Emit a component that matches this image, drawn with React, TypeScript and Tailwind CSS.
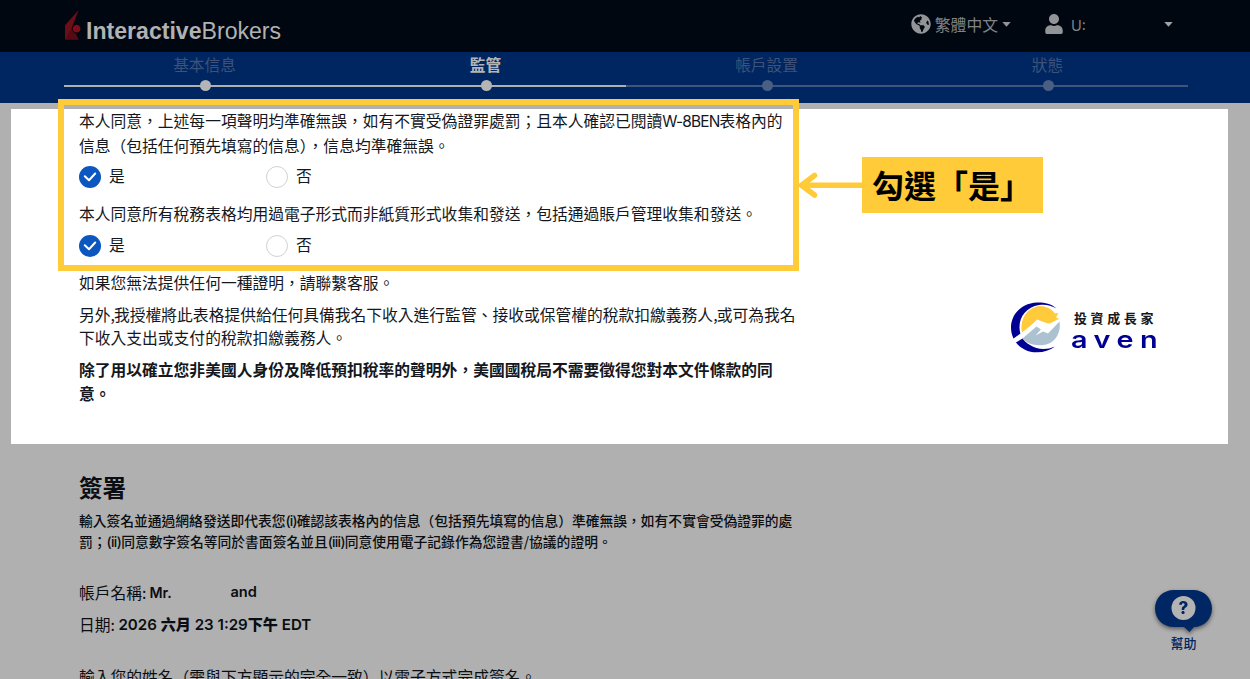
import type { ReactNode } from "react";
import { FaGlobeAmericas, FaUser } from "react-icons/fa";
import clsx from "clsx";

interface Step {
  label: string;
  state: "done" | "current" | "todo";
}

const steps: Step[] = [
  { label: "基本信息", state: "done" },
  { label: "監管", state: "current" },
  { label: "帳戶設置", state: "todo" },
  { label: "狀態", state: "todo" },
];

function Caret() {
  return (
    <svg width="9" height="5" viewBox="0 0 9 5" fill="currentColor">
      <path d="M0.3 0h8.4L4.5 4.7z" />
    </svg>
  );
}

function BrokerLogo() {
  return (
    <div className="flex items-start">
      <svg width="17" height="31" viewBox="0 0 17 31" className="mt-[10px]">
        <path d="M14.6 0 8 17.500 14.6 29.500H1V15.200z" fill="#6d0d17" />
        <path d="M8 17.500 14.6 29.500H1z" fill="#560a13" />
        <circle cx="12.600" cy="18.700" r="4.300" fill="#7d0d18" stroke="#000711" strokeWidth="0.9" />
      </svg>
      <div className="ml-[5px] mt-[18px] text-[23.1px] leading-[26px] text-[#b2b2b2] font-['Liberation_Sans',sans-serif]">
        <span className="font-bold">Interactive</span>
        <span>Brokers</span>
      </div>
    </div>
  );
}

function TopBar() {
  return (
    <header className="flex h-[52px] justify-between bg-[#000711] pl-16 pr-[77px]">
      <BrokerLogo />
      <div className="flex h-[48px] items-center text-[#7f8286]">
        <FaGlobeAmericas size={20} className="text-[#929497]" />
        <span className="ml-[4px] mt-[1px] text-[15.8px]">繁體中文</span>
        <span className="ml-[4px] text-[#929497]">
          <Caret />
        </span>
        <FaUser size={20} className="ml-[33px] text-[#929497]" />
        <span className="ml-[7px] mt-[3px] w-[93px] font-[Inter] text-[14.5px]">U:</span>
        <span className="text-[#a0a2a5]">
          <Caret />
        </span>
      </div>
    </header>
  );
}

function ProgressSteps() {
  return (
    <nav className="relative flex h-[50.5px] bg-[#002661] px-16">
      <div className="absolute left-16 top-[33px] h-[2px] w-[562px] bg-[#b0b0b0]" />
      <div className="absolute left-[626px] top-[33px] h-[2px] w-[562px] bg-[#3f557c]" />
      {steps.map((step) => (
        <div key={step.label} className="relative flex w-[281px] shrink-0 flex-col items-center">
          <span
            className={clsx(
              "mt-[1px] h-[24px] text-[15.7px] leading-[24px]",
              step.state === "current" ? "font-bold text-[#b5b5b5]" : "text-[#3d5279]"
            )}
          >
            {step.label}
          </span>
          <span
            className={clsx(
              "ml-px mt-[3px] size-[11px] rounded-full",
              step.state === "todo" ? "bg-[#4b5f84]" : "bg-[#b5b5b5]"
            )}
          />
        </div>
      ))}
    </nav>
  );
}

function Option({ label, checked }: { label: string; checked?: boolean }) {
  return (
    <div className="flex w-[187px] items-center gap-2">
      {checked ? (
        <span className="flex size-[22px] items-center justify-center rounded-full bg-[#0c56c0]">
          <svg width="14" height="10" viewBox="0 0 14 10" fill="none">
            <path
              d="M1.8 4.2 6 8.2 12.2 1.5"
              stroke="#fff"
              strokeWidth="2"
              strokeLinecap="round"
              strokeLinejoin="round"
            />
          </svg>
        </span>
      ) : (
        <span className="size-[22px] rounded-full border border-[#d2d2d2] bg-white" />
      )}
      <span className="-mt-[2px] leading-[24px]">{label}</span>
    </div>
  );
}

function YesNo() {
  return (
    <div className="mt-[8px] flex h-[24px]">
      <Option label="是" checked />
      <Option label="否" />
    </div>
  );
}

function Paragraph({ lines, className }: { lines: ReactNode[]; className?: string }) {
  return (
    <p className={className}>
      {lines.map((line, i) => (
        <span key={i} className="block whitespace-nowrap">
          {line}
        </span>
      ))}
    </p>
  );
}

function AvenLogo() {
  return (
    <div className="flex">
      <svg width="52" height="52" viewBox="0 0 52 52">
        <path
          d="M46.5 6.500C41 1.500 34 0.300 27 0.500C12 1 1 12 1 25.500C1 40 13 50.500 27 50.300C34 50.200 40 48.500 45 44.500C36 48.500 27 47.500 20 43C13 39 9.500 33 9.500 25C9.500 14 17 5 29 3C35 2 41 3 46.500 6.500z"
          fill="#000093"
        />
        <path
          d="M12 30C9.500 16 18 5.200 30 4C36 4 42 7 45 11.500L48.500 11L46 15.500L49.500 17L42 22L36.500 21L27 17.500L16 29z"
          fill="#ffcb3a"
        />
        <path d="M1.500 38 12 30.500 27 18.500 34 24.500 49.500 16.500 36 30 26 30 12.500 36.500 5 41z" fill="#fff" />
        <path
          d="M12.500 36.500 26.500 24.500 31 27.500 25.500 33.500 33 29.500 38 31.500 49.500 19.500C51.500 32 44 43 31 43.200C23 43.500 16 41 12.500 36.500z"
          fill="#adc2d0"
        />
      </svg>
      <div className="ml-[12px] mt-[6px]">
        <div className="h-[21px] whitespace-nowrap text-[13px] font-bold leading-[20px] tracking-[3.6px] text-[#15181d]">
          投資成長家
        </div>
        <div className="-ml-[3px] w-[76px] origin-left scale-x-120 text-[24px] font-semibold leading-[22px] tracking-[5.4px] text-[#000093] font-['Inter',sans-serif]">
          aven
        </div>
      </div>
    </div>
  );
}

function Declarations() {
  return (
    <main className="ml-[11px] mt-[6.5px] flex h-[335px] w-[1217px] bg-white pl-[68px] text-[#14181e]">
      <section className="w-[931px] text-[15.77px] leading-[23.7px]">
        <Paragraph
          lines={[
            <>
              本人同意，上述每一項聲明均準確無誤，如有不實受偽證罪處罰；且本人確認已閱讀
              <span className="text-[15.4px] tracking-[-0.8px] font-['Inter',sans-serif]">W-8BEN</span>
              表格內的
            </>,
            "信息（包括任何預先填寫的信息），信息均準確無誤。",
          ]}
        />
        <YesNo />
        <Paragraph
          className="mt-[13px]"
          lines={["本人同意所有稅務表格均用過電子形式而非紙質形式收集和發送，包括通過賬戶管理收集和發送。"]}
        />
        <YesNo />
        <Paragraph className="mt-[13px]" lines={["如果您無法提供任何一種證明，請聯繫客服。"]} />
        <Paragraph
          className="mt-[7.8px]"
          lines={[
            <>
              另外<span className="tracking-[-0.9px]">,</span>
              我授權將此表格提供給任何具備我名下收入進行監管、接收或保管權的稅款扣繳義務人
              <span className="tracking-[-0.9px]">,</span>或可為我名
            </>,
            "下收入支出或支付的稅款扣繳義務人。",
          ]}
        />
        <Paragraph
          className="mt-[7.8px] font-bold"
          lines={["除了用以確立您非美國人身份及降低預扣稅率的聲明外，美國國稅局不需要徵得您對本文件條款的同", "意。"]}
        />
      </section>
      <div className="mt-[193px]">
        <AvenLogo />
      </div>
    </main>
  );
}

function Signature() {
  return (
    <section className="pl-[79px] text-[#0a0d11]">
      <h2 className="mt-[26px] text-[23.5px] font-bold leading-[34px]">簽署</h2>
      <Paragraph
        className="mt-[7px] text-[13.77px] leading-[19.7px] font-medium"
        lines={[
          <>
            輸入簽名並通過網絡發送即代表您
            <span className="tracking-[-0.8px] font-['Inter',sans-serif]">(i)</span>
            確認該表格內的信息（包括預先填寫的信息）準確無誤，如有不實會受偽證罪的處
          </>,
          <>
            罰；<span className="tracking-[-0.6px] font-['Inter',sans-serif]">(ii)</span>
            同意數字簽名等同於書面簽名並且
            <span className="tracking-[-0.7px] font-['Inter',sans-serif]">(iii)</span>
            同意使用電子記錄作為您證書/協議的證明。
          </>,
        ]}
      />
      <div className="mt-[28px] flex h-[24px] items-center text-[15.77px]">
        <span>帳戶名稱:</span>
        <span className="ml-[3px] w-[81px] text-[14.2px] font-semibold font-['Inter',sans-serif]">Mr.</span>
        <span className="mt-[2px] text-[14.6px] font-semibold font-['Inter',sans-serif]">and</span>
      </div>
      <div className="mt-[8.5px] flex h-[24px] items-center whitespace-pre text-[15.77px]">
        <span>日期: </span>
        <span className="text-[15.1px] font-semibold font-['Inter','Noto_Sans_CJK_TC',sans-serif]">
          2026 <b>六月</b> 23 1:29<b>下午</b> EDT
        </span>
      </div>
      <p className="mt-[28px] whitespace-nowrap text-[15.77px] leading-[24px]">
        輸入您的姓名（需與下方顯示的完全一致）以電子方式完成簽名。
      </p>
    </section>
  );
}

// Yellow frame, arrow and label laid over the declarations
function Annotation() {
  return (
    <>
      <div className="absolute left-[58px] top-[99px] h-[172px] w-[741px] border-[6px] border-[#ffcb38]" />
      <svg className="absolute left-[798px] top-[171px]" width="64" height="28" viewBox="0 0 64 28" fill="none">
        <path
          d="M16.5 4.5 3.5 14.3 16.5 24M4 14.2H64"
          stroke="#ffcb38"
          strokeWidth="5.5"
          strokeLinecap="round"
          strokeLinejoin="round"
        />
      </svg>
      <div className="absolute left-[862px] top-[157px] flex h-[56px] w-[181px] items-center whitespace-nowrap bg-[#ffcb38] pb-[2px] pl-[10px] text-[32px] font-bold leading-none text-black">
        勾選「是」
      </div>
    </>
  );
}

function HelpButton() {
  return (
    <button className="absolute left-[1154px] top-[589px] flex w-[59px] flex-col items-center text-[#002763]">
      <svg width="59" height="48" viewBox="0 0 59 48" className="overflow-visible drop-shadow-[0_2px_2px_rgba(0,0,0,0.5)]">
        <path
          d="M20 1H39C50 1 58 9 58 19.500C58 30 50 38 40 38L35.500 43L30 38H20C9 38 1 30 1 19.500C1 9 9 1 20 1z"
          fill="#002763"
        />
        <circle cx="29.500" cy="19" r="12" fill="#b3b3b3" />
        <text
          x="29.500"
          y="25"
          textAnchor="middle"
          fontSize="17"
          fontWeight="800"
          fontFamily="Inter, sans-serif"
          fill="#002763"
        >
          ?
        </text>
      </svg>
      <span className="-mt-[3px] text-[13px] font-medium leading-[18px]">幫助</span>
    </button>
  );
}

export default function App() {
  return (
    <div
      lang="zh-Hant"
      className="relative h-[679px] w-[1250px] overflow-hidden bg-[#b0b0b0] font-['Noto_Sans_CJK_TC',sans-serif]"
    >
      <TopBar />
      <ProgressSteps />
      <Declarations />
      <Signature />
      <Annotation />
      <HelpButton />
    </div>
  );
}
